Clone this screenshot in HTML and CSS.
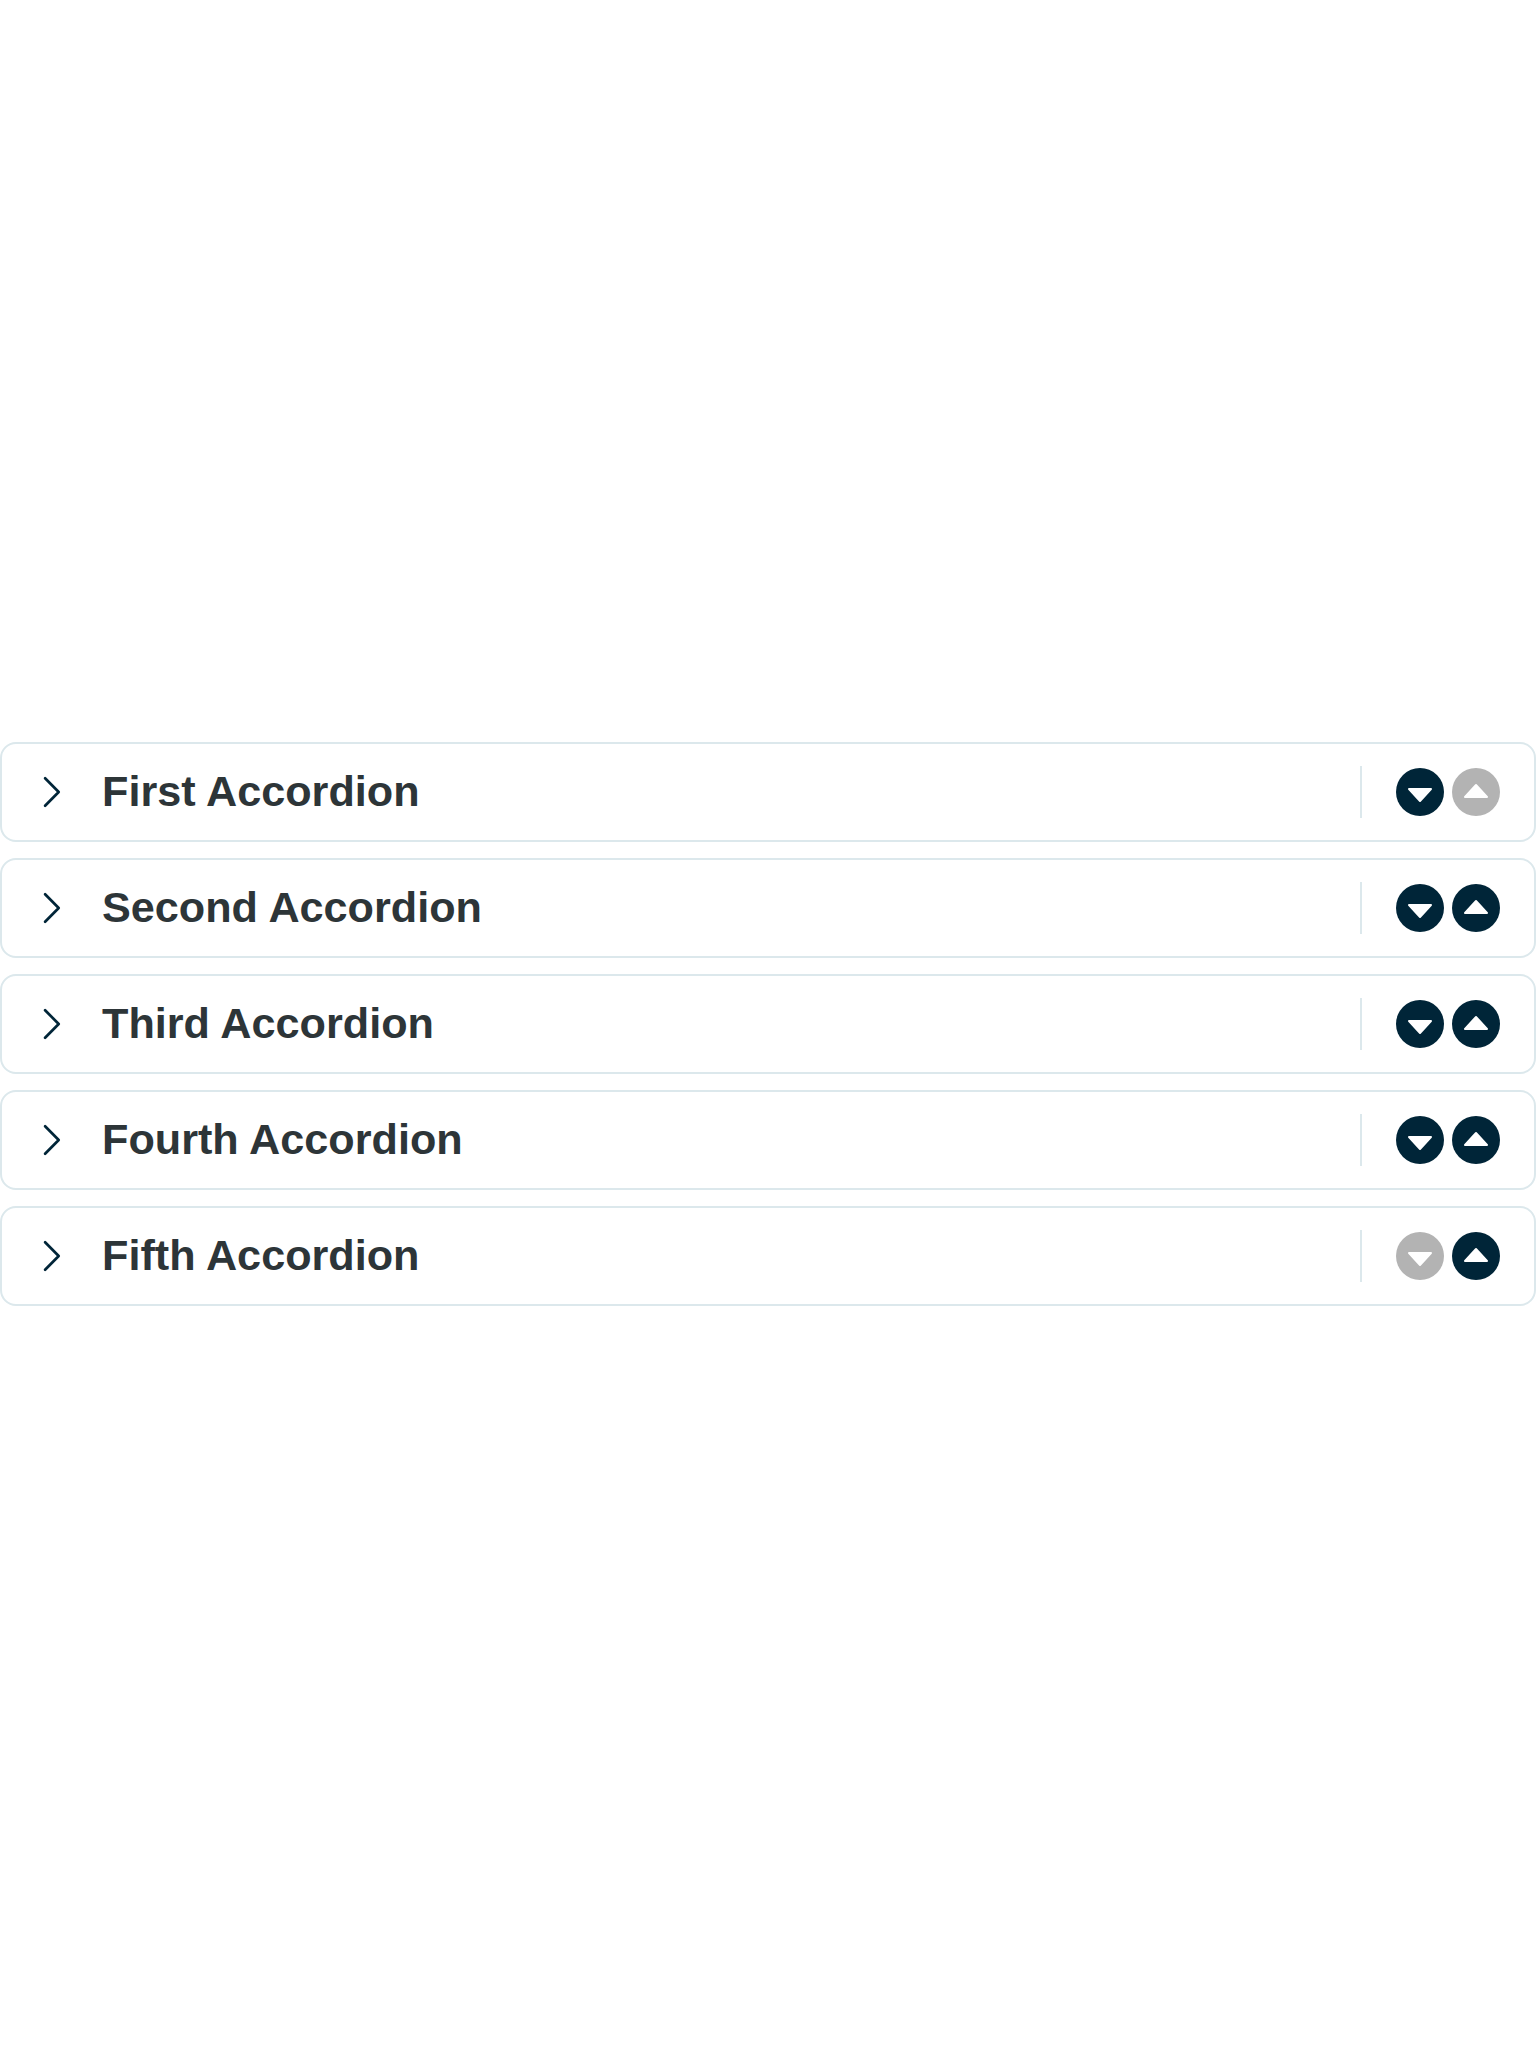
FILE: index.html
```html
<!DOCTYPE html>
<html lang="en">
<head>
<meta charset="utf-8">
<title>Accordions</title>
<link rel="stylesheet" href="styles.css">
</head>
<body>
<svg width="0" height="0" class="sprite" aria-hidden="true">
  <symbol id="chevron" viewBox="0 0 32 32"><path d="M9.1 2.2 22.7 16 9.1 29.8" fill="none" stroke="currentColor" stroke-width="2.7" stroke-linecap="round" stroke-linejoin="round"/></symbol>
  <symbol id="down" viewBox="0 0 48 48"><path d="M13 21H35L24 33Z" fill="currentColor" stroke="currentColor" stroke-width="2" stroke-linejoin="round"/></symbol>
  <symbol id="up" viewBox="0 0 48 48"><path d="M13 29H35L24 17Z" fill="currentColor" stroke="currentColor" stroke-width="2" stroke-linejoin="round"/></symbol>
</svg>
<main class="list">
  <section class="accordion">
    <svg class="chevron"><use href="#chevron"/></svg>
    <h2 class="title">First Accordion</h2>
    <div class="actions">
      <button class="move" aria-label="Move down"><svg class="arrow"><use href="#down"/></svg></button>
      <button class="move" aria-label="Move up" disabled><svg class="arrow"><use href="#up"/></svg></button>
    </div>
  </section>
  <section class="accordion">
    <svg class="chevron"><use href="#chevron"/></svg>
    <h2 class="title">Second Accordion</h2>
    <div class="actions">
      <button class="move" aria-label="Move down"><svg class="arrow"><use href="#down"/></svg></button>
      <button class="move" aria-label="Move up"><svg class="arrow"><use href="#up"/></svg></button>
    </div>
  </section>
  <section class="accordion">
    <svg class="chevron"><use href="#chevron"/></svg>
    <h2 class="title">Third Accordion</h2>
    <div class="actions">
      <button class="move" aria-label="Move down"><svg class="arrow"><use href="#down"/></svg></button>
      <button class="move" aria-label="Move up"><svg class="arrow"><use href="#up"/></svg></button>
    </div>
  </section>
  <section class="accordion">
    <svg class="chevron"><use href="#chevron"/></svg>
    <h2 class="title">Fourth Accordion</h2>
    <div class="actions">
      <button class="move" aria-label="Move down"><svg class="arrow"><use href="#down"/></svg></button>
      <button class="move" aria-label="Move up"><svg class="arrow"><use href="#up"/></svg></button>
    </div>
  </section>
  <section class="accordion">
    <svg class="chevron"><use href="#chevron"/></svg>
    <h2 class="title">Fifth Accordion</h2>
    <div class="actions">
      <button class="move" aria-label="Move down" disabled><svg class="arrow"><use href="#down"/></svg></button>
      <button class="move" aria-label="Move up"><svg class="arrow"><use href="#up"/></svg></button>
    </div>
  </section>
</main>
</body>
</html>
```
FILE: styles.css
```css
* {
  box-sizing: border-box;
}

body {
  margin: 0;
  min-height: 100vh;
  display: flex;
  align-items: center;
  background: #fff;
  font-family: "Liberation Sans", Arial, sans-serif;
}

.sprite {
  display: none;
}

.list {
  width: 100%;
  display: flex;
  flex-direction: column;
  gap: 16px;
}

.accordion {
  height: 100px;
  padding: 0 34px;
  display: flex;
  align-items: center;
  border: 2px solid #dce8ec;
  border-radius: 16px;
  background: #fff;
}

.chevron {
  width: 32px;
  height: 32px;
  color: #002538;
}

.title {
  flex: 1;
  margin: 0 0 0 34px;
  padding-bottom: 2px;
  font-size: 43.2px;
  line-height: 52px;
  font-weight: 700;
  color: #2d3538;
}

.actions {
  height: 52px;
  padding-left: 34px;
  display: flex;
  align-items: center;
  gap: 8px;
  border-left: 2px solid #dce8ec;
}

.move {
  width: 48px;
  height: 48px;
  padding: 0;
  border: 0;
  border-radius: 50%;
  background: #002538;
  color: #fff;
}

.move:disabled {
  background: #b3b3b3;
}

.arrow {
  display: block;
  width: 48px;
  height: 48px;
}
```
